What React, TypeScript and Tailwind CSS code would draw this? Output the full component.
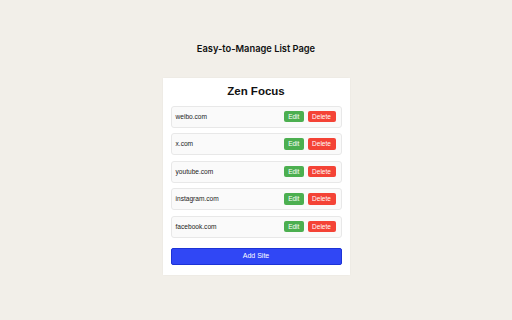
import React from 'react';

const sites = ['weibo.com', 'x.com', 'youtube.com', 'instagram.com', 'facebook.com'];

export default function App() {
    return (
        <div className="min-h-[320px] w-[512px] bg-[#f2efe9] flex flex-col items-center pt-[43px]" style={{ fontFamily: 'Arial, "Liberation Sans", sans-serif' }}>
            <h2 className="text-[9.3px] leading-[12px] font-semibold text-[#111]" style={{ fontFamily: 'Inter, sans-serif' }}>
                Easy-to-Manage List Page
            </h2>

            <div className="mt-[23px] w-[187px] bg-white px-[8px] pt-[6px] pb-[10px] shadow-[0_0_2px_rgba(0,0,0,0.05)]">
                <h1 className="text-center text-[11.5px] leading-[14px] font-bold text-[#111] mb-[7.5px]">Zen Focus</h1>

                <div className="flex flex-col">
                    {sites.map(site => (
                        <div
                            key={site}
                            className="h-[22px] mb-[5.5px] flex items-center justify-between pl-[4px] pr-[5px] bg-[#fafafa] border border-[#e8e8e8] rounded-[3px]"
                        >
                            <span className="text-[6.6px] font-medium text-[#1a1a1a]">{site}</span>
                            <div className="flex items-center gap-[3.5px]">
                                <button className="w-[20.5px] h-[11.5px] flex items-center justify-center bg-[#4caf50] text-white text-[6.5px] rounded-[2px]">
                                    Edit
                                </button>
                                <button className="w-[28px] h-[11.5px] flex items-center justify-center bg-[#f44336] text-white text-[6.5px] rounded-[2px]">
                                    Delete
                                </button>
                            </div>
                        </div>
                    ))}
                </div>

                <button className="mt-[4.5px] w-full h-[17.5px] flex items-center justify-center bg-[#3047f5] border border-[#1d33d6] rounded-[2px] text-white text-[7px]">
                    Add Site
                </button>
            </div>
        </div>
    );
}
